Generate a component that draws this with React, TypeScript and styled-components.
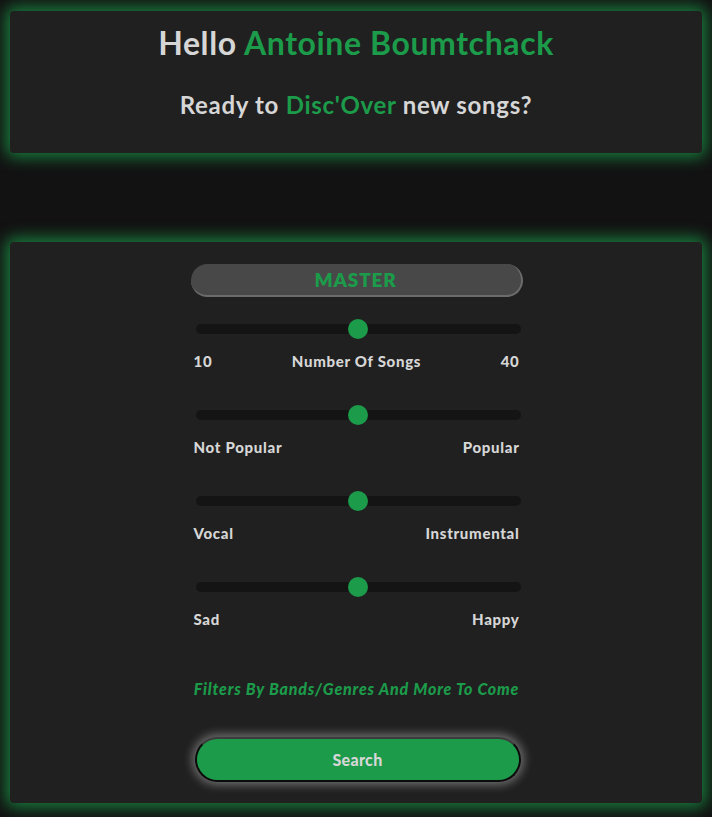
import React from "react";
import styled, { createGlobalStyle } from "styled-components";

const GREEN = "#1c9b4a";
const TEXT = "#d6d6d6";

const Global = createGlobalStyle`
  html, body { margin: 0; padding: 0; background: #121212; }
  body { font-family: "Lato", "Open Sans", sans-serif; }
  * { box-sizing: border-box; }
`;

const Page = styled.div`
  display: flex;
  flex-direction: column;
  gap: 89px;
  padding: 11px 10px 14px;
`;

const Card = styled.section`
  background: #202020;
  border-radius: 4px;
  box-shadow: 0 0 16px 4px rgba(28, 155, 74, 0.8);
`;

const Header = styled(Card)`
  padding: 12px 0 33px;
  display: flex;
  flex-direction: column;
  align-items: center;
  gap: 27px;
`;

const Title = styled.h1`
  margin: 0;
  font-size: 32px;
  line-height: 40px;
  font-weight: 700;
  color: ${TEXT};
  letter-spacing: 0.6px;
`;

const Subtitle = styled.h2`
  margin: 0;
  font-size: 24px;
  line-height: 30px;
  font-weight: 700;
  color: ${TEXT};
  letter-spacing: 0.7px;
`;

const Accent = styled.span`
  color: ${GREEN};
`;

const Panel = styled(Card)`
  padding: 22px 0 21px;
  display: flex;
  flex-direction: column;
  align-items: center;
`;

const Column = styled.div`
  width: 330px;
  margin-left: 1px;
  display: flex;
  flex-direction: column;
`;

const ModeButton = styled.button`
  height: 33px;
  width: 332px;
  margin-left: -1px;
  border-radius: 17px;
  background: #484848;
  border-style: solid;
  border-width: 0 2px 2px 0;
  border-color: #6c6c6c;
  color: ${GREEN};
  font-family: inherit;
  font-weight: 800;
  font-size: 19px;
  letter-spacing: 0.8px;
  padding: 0;
  line-height: 31px;
  cursor: pointer;
`;

const SliderGroup = styled.div<{ $first?: boolean }>`
  display: flex;
  flex-direction: column;
  gap: 17px;
  margin-top: ${(p) => (p.$first ? "27px" : "39px")};
`;

const Range = styled.input.attrs({ type: "range" })`
  appearance: none;
  -webkit-appearance: none;
  display: block;
  margin: 0 0 0 4px;
  width: 325px;
  height: 10px;
  border-radius: 5px;
  background: #141414;
  outline: none;

  &::-webkit-slider-thumb {
    -webkit-appearance: none;
    appearance: none;
    width: 20px;
    height: 20px;
    border-radius: 50%;
    background: ${GREEN};
    border: none;
    cursor: pointer;
  }
`;

const Labels = styled.div`
  display: flex;
  justify-content: space-between;
  align-items: center;
  margin-left: 2px;
  width: 326px;
  font-size: 15px;
  line-height: 20px;
  font-weight: 900;
  letter-spacing: 0.7px;
  color: ${TEXT};
`;

const Note = styled.p`
  margin: 50px 0 0;
  text-align: center;
  font-size: 16px;
  line-height: 20px;
  font-weight: 900;
  font-style: italic;
  letter-spacing: 0.8px;
  color: ${GREEN};
`;

const SearchButton = styled.button`
  margin: 38px 0 0 3px;
  height: 45px;
  width: 326px;
  border-radius: 23px;
  background: ${GREEN};
  border: 2px solid #0b0b0b;
  border-top-color: #3c3c3c;
  box-shadow: 0 0 10px 3px rgba(255, 255, 255, 0.35);
  color: ${TEXT};
  font-family: inherit;
  font-size: 16px;
  font-weight: 900;
  letter-spacing: 0.3px;
  cursor: pointer;
`;

type SliderProps = { left: string; middle?: string; right: string; first?: boolean };

const Slider = ({ left, middle, right, first }: SliderProps) => (
  <SliderGroup $first={first}>
    <Range min={0} max={100} defaultValue={50} />
    <Labels>
      <span>{left}</span>
      {middle && <span>{middle}</span>}
      <span>{right}</span>
    </Labels>
  </SliderGroup>
);

export default function App() {
  return (
    <>
      <Global />
      <Page>
        <Header>
          <Title>
            Hello <Accent>Antoine Boumtchack</Accent>
          </Title>
          <Subtitle>
            Ready to <Accent>Disc'Over</Accent> new songs?
          </Subtitle>
        </Header>
        <Panel>
          <Column>
            <ModeButton>MASTER</ModeButton>
            <Slider first left="10" middle="Number Of Songs" right="40" />
            <Slider left="Not Popular" right="Popular" />
            <Slider left="Vocal" right="Instrumental" />
            <Slider left="Sad" right="Happy" />
            <Note>Filters By Bands/Genres And More To Come</Note>
            <SearchButton>Search</SearchButton>
          </Column>
        </Panel>
      </Page>
    </>
  );
}
